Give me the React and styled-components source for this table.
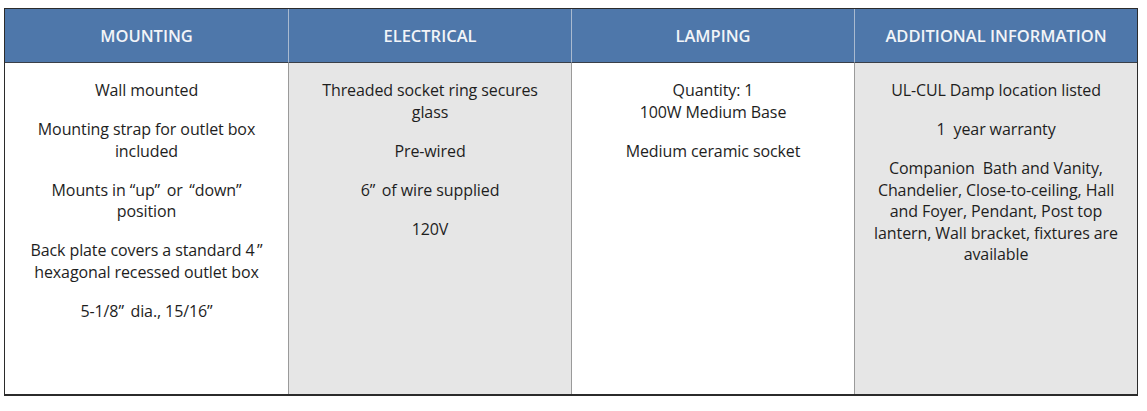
import styled, { createGlobalStyle } from 'styled-components'

const Global = createGlobalStyle`
    body {
        margin: 0;
        background: #ffffff;
        font-family: "Open Sans", "Noto Sans", sans-serif;
    }
`

const colunas = [
    {
        titulo: 'MOUNTING',
        cinza: false,
        itens: [
            ['Wall mounted'],
            ['Mounting strap for outlet box', 'included'],
            ['Mounts in \u201Cup\u201D\u2009 or \u2009\u201Cdown\u201D', 'position'],
            ['Back plate covers a standard 4\u2009\u201D', 'hexagonal recessed outlet box'],
            ['5-1/8\u201D\u2009 dia., 15/16\u201D'],
        ],
    },
    {
        titulo: 'ELECTRICAL',
        cinza: true,
        itens: [
            ['Threaded socket ring secures', 'glass'],
            ['Pre-wired'],
            ['6\u201D\u2009 of wire supplied'],
            ['120V'],
        ],
    },
    {
        titulo: 'LAMPING',
        cinza: false,
        itens: [
            ['Quantity: 1', '100W Medium Base'],
            ['Medium ceramic socket'],
        ],
    },
    {
        titulo: 'ADDITIONAL INFORMATION',
        cinza: true,
        itens: [
            ['UL-CUL Damp location listed'],
            ['1  year warranty'],
            [
                'Companion  Bath and Vanity,',
                'Chandelier, Close-to-ceiling, Hall',
                'and Foyer, Pendant, Post top',
                'lantern, Wall bracket, fixtures are',
                'available',
            ],
        ],
    },
]

export default function App() {
    return (
        <>
            <Global />
            <Pagina>
                <Tabela>
                    {colunas.map((c) => (
                        <Cabecalho key={c.titulo}>{c.titulo}</Cabecalho>
                    ))}
                    {colunas.map((c) => (
                        <Celula key={c.titulo} cinza={c.cinza}>
                            {c.itens.map((linhas, i) => (
                                <Paragrafo key={i}>
                                    {linhas.map((l, j) => (
                                        <Linha key={j}>{l}</Linha>
                                    ))}
                                </Paragrafo>
                            ))}
                        </Celula>
                    ))}
                </Tabela>
            </Pagina>
        </>
    )
}

const Pagina = styled.div`
    padding: 8px 9px 0 4px;
`

const Tabela = styled.div`
    display: grid;
    grid-template-columns: repeat(4, 1fr);
    grid-template-rows: 54px 331px;
    border: 1px solid #2b2b2b;
    border-top: 1.5px solid #2b2b2b;
    border-bottom: 2px solid #2b2b2b;
`

const Cabecalho = styled.div`
    display: flex;
    justify-content: center;
    align-items: center;

    background-color: #4e77aa;
    color: #f2f4f8;
    font-size: 16.5px;
    font-weight: 600;

    border-bottom: 1px solid #3a3f48;
    border-left: 1px solid #a9bad0;

    &:first-child {
        border-left: none;
    }
`

const Celula = styled.div`
    padding: 17px 4px 0;
    text-align: center;
    background-color: ${(props) => (props.cinza ? '#e6e6e6' : '#ffffff')};
    border-left: 1px solid #9a9a9a;

    &:nth-child(5) {
        border-left: none;
    }
`

const Paragrafo = styled.p`
    margin: 0 0 17.5px;
    font-size: 16px;
    line-height: 21.5px;
    letter-spacing: -0.1px;
    color: #1e1e1e;
`

const Linha = styled.span`
    display: block;
    white-space: pre;
`
